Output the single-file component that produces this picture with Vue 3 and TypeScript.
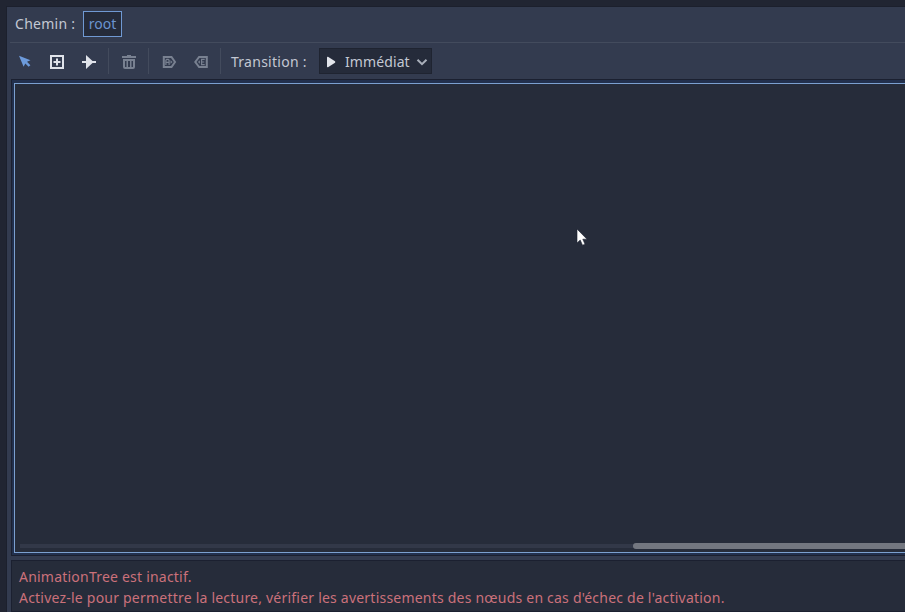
<script setup lang="ts">
import { ref } from 'vue'

const path = ref<string[]>(['root'])
const transition = ref('Immédiat')
const messages: string[] = [
  'AnimationTree est inactif.',
  "Activez-le pour permettre la lecture, vérifier les avertissements des nœuds en cas d'échec de l'activation.",
]
</script>

<template>
  <div class="editor">
    <main class="panel">
      <nav class="path-row">
        <span class="path-label">Chemin :</span>
        <button v-for="p in path" :key="p" class="crumb">{{ p }}</button>
      </nav>
      <header class="toolbar">
        <button class="tool active" aria-label="select">
          <svg viewBox="0 0 16 16"><path d="M2 1.8 13.5 6.2 10 7.8 13.4 11.2 11.6 12.8 8.3 9.5 6.6 12.8Z" /></svg>
        </button>
        <button class="tool" aria-label="add">
          <svg viewBox="0 0 16 16"><path fill-rule="evenodd" d="M1 1H15V15H1ZM3 3V13H13V3ZM7 4.5H9V7H11.5V9H9V11.5H7V9H4.5V7H7Z" /></svg>
        </button>
        <button class="tool" aria-label="connect">
          <svg viewBox="0 0 16 16"><path d="M5 1 11.5 7H15V9H11.5L5 15V9H1V7H5Z" /></svg>
        </button>
        <i class="divider"></i>
        <button class="tool off" aria-label="delete">
          <svg viewBox="0 0 16 16"><path fill-rule="evenodd" d="M1 2H6V1H10V2H15V4H1ZM2 5H14V13Q14 15 12 15H4Q2 15 2 13ZM4 7V13H5.5V7ZM7 7V13H9V7ZM10.5 7V13H12V7Z" /></svg>
        </button>
        <i class="divider"></i>
        <button class="tool off" aria-label="autoplay">
          <svg viewBox="0 0 16 16"><path class="line" d="M2.8 3H10.5L14 8 10.5 13H2.8Z" /><path class="thin" d="M4.9 11V6.3L5.8 5.4H7.2L8.1 6.3V11M4.9 8.4H8.1" /><path d="M9.5 6.3 11.5 8 9.5 9.7Z" /></svg>
        </button>
        <button class="tool off" aria-label="end">
          <svg viewBox="0 0 16 16"><path class="line" d="M13.8 3H6.1L2.3 8 6.1 13H13.8Z" /><path class="thin" d="M11.7 5.4H8.6V10.6H11.7M8.6 8H11.2" /><path d="M6.9 6.3 4.9 8 6.9 9.7Z" /></svg>
        </button>
        <i class="divider"></i>
        <span class="transition-label">Transition :</span>
        <button class="select">
          <svg class="play" viewBox="0 0 10 12"><path d="M1 1.4Q1 .5 2 .8L9 5.3Q9.6 6 9 6.7L2 11.2Q1 11.5 1 10.6Z" /></svg>
          <span class="value">{{ transition }}</span>
          <svg class="chevron" viewBox="0 0 12 12"><path class="line" d="M1.5 3.7 6 8.2 10.5 3.7" /></svg>
        </button>
      </header>
      <section class="graph">
        <div class="canvas">
          <div class="scroll"><div class="thumb"></div></div>
          <svg class="cursor" viewBox="0 0 12 18"><path d="M1 1V15L4.2 12 6.5 17.2 9 16.2 6.8 11.2H11Z" /></svg>
        </div>
      </section>
      <footer class="errors">
        <p v-for="m in messages" :key="m">{{ m }}</p>
      </footer>
    </main>
  </div>
</template>

<style>
body {
  background: #212532;
  overflow: hidden;
}
</style>

<style scoped>
.editor {
  box-sizing: border-box;
  height: 612px;
  padding: 6px 0 0 6px;
  background: #212532;
  color: #c3c8d3;
  font: 14px/21px "Noto Sans", sans-serif;
  letter-spacing: 0.216px;
  overflow: hidden;
}
.panel {
  box-sizing: border-box;
  display: flex;
  flex-direction: column;
  height: 606px;
  padding-left: 4px;
  border-top: 1px solid #1c202d;
  border-left: 1px solid #1c202d;
  background: #333b4f;
}
button {
  box-sizing: border-box;
  margin: 0;
  padding: 0;
  border: 0;
  background: none;
  color: inherit;
  font: inherit;
}
.path-row {
  box-sizing: border-box;
  display: flex;
  align-items: center;
  gap: 8px;
  height: 36px;
  padding: 0 0 2px 5px;
  margin-left: -1px;
  border-bottom: 1px solid #434b5d;
  white-space: nowrap;
}
.path-label {
  width: 60px;
  letter-spacing: 0.28px;
}
.crumb {
  width: 39px;
  height: 26px;
  border: 1px solid #7099d3;
  background: #252b3a;
  color: #6b94d0;
}
.toolbar {
  display: flex;
  align-items: center;
  height: 36px;
  padding-left: 6px;
  white-space: nowrap;
}
.tool {
  display: flex;
  width: 16px;
  height: 16px;
  margin: 2px 16px 0 0;
  color: #e0e3ea;
}
.tool.active {
  color: #6d9bdc;
}
.tool.off {
  color: #798191;
}
svg {
  display: block;
  fill: currentColor;
}
.tool svg {
  width: 16px;
  height: 16px;
}
.line {
  fill: none;
  stroke: currentColor;
  stroke-width: 2;
}
.thin {
  fill: none;
  stroke: currentColor;
  stroke-width: 1.2;
}
.divider {
  width: 1px;
  height: 26px;
  margin: 0 12px 0 -5px;
  background: #434b5d;
}
.transition-label {
  width: 78px;
  margin: 0 10px 0 -2px;
  letter-spacing: 0.26px;
}
.select {
  display: flex;
  align-items: center;
  width: 113px;
  height: 26px;
  padding: 0 3px 0 6px;
  border: 1px solid #1f2431;
  background: #252b3a;
}
.value {
  letter-spacing: 0.1px;
}
.play {
  width: 10px;
  height: 12px;
  margin: 1px 9px 0 0;
  color: #e2e5eb;
}
.chevron {
  width: 12px;
  height: 12px;
  margin: 1px 0 0 auto;
  color: #a9afba;
}
.graph {
  box-sizing: border-box;
  height: 477px;
  padding: 3px 0 3px 2px;
  border: 1px solid #1b2030;
  border-right: 0;
  background: #22304d;
}
.canvas {
  box-sizing: border-box;
  display: flex;
  align-items: flex-end;
  position: relative;
  height: 470px;
  padding: 0 0 3px 5px;
  border: 1px solid #7ba0d0;
  border-right: 0;
  background: #262c3a;
}
.scroll {
  display: flex;
  align-items: center;
  justify-content: flex-end;
  flex: 1;
  height: 6px;
  background: linear-gradient(#323848, #323848) center / 100% 4px no-repeat;
}
.thumb {
  width: 272px;
  height: 6px;
  border-radius: 3px 0 0 3px;
  background: #737780;
}
.cursor {
  position: absolute;
  left: 560.5px;
  top: 144px;
  width: 12px;
  height: 18px;
  color: #fff;
  stroke: #1d2230;
  stroke-width: 0.6;
}
.errors {
  box-sizing: border-box;
  height: 52px;
  margin-top: 4px;
  padding: 5px 0 0 7px;
  border: 1px solid #1b2030;
  border-right: 0;
  background: #262c3a;
  color: #cb717a;
  white-space: nowrap;
}
p {
  margin: 0;
}
</style>
